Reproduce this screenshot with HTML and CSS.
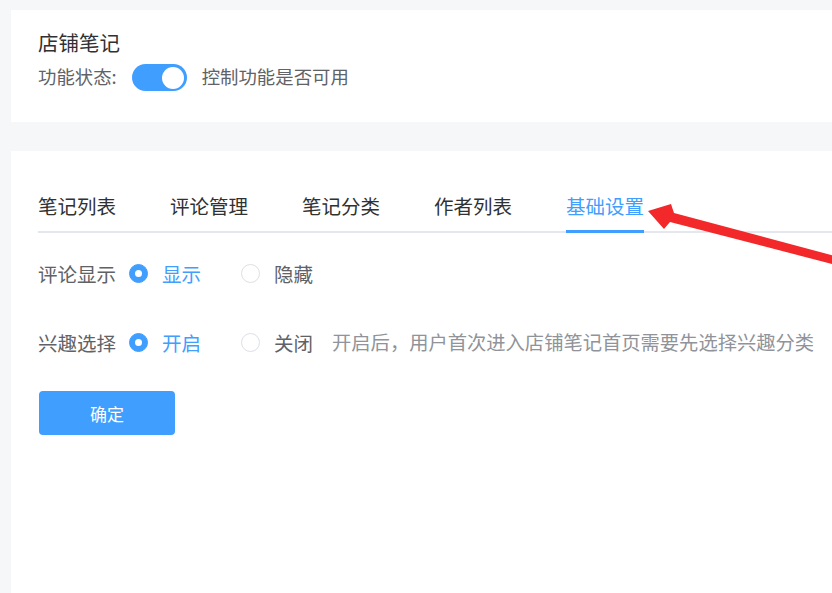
FILE: index.html
```html
<!DOCTYPE html>
<html lang="zh-CN">
<head>
<meta charset="utf-8">
<title>店铺笔记</title>
<link rel="stylesheet" href="styles.css">
</head>
<body>
<div class="page">
  <section class="card card-top">
    <h1 class="title">店铺笔记</h1>
    <div class="status-row">
      <span class="status-label">功能状态:</span>
      <span class="switch"><span class="knob"></span></span>
      <span class="status-hint">控制功能是否可用</span>
    </div>
  </section>

  <section class="card card-main">
    <nav class="tabs">
      <span class="tab">笔记列表</span>
      <span class="tab">评论管理</span>
      <span class="tab">笔记分类</span>
      <span class="tab">作者列表</span>
      <span class="tab active">基础设置</span>
    </nav>

    <div class="form">
      <div class="form-row">
        <span class="form-label">评论显示</span>
        <span class="radio checked"><span class="dot"></span></span>
        <span class="radio-text on">显示</span>
        <span class="radio"></span>
        <span class="radio-text">隐藏</span>
      </div>
      <div class="form-row row-two">
        <span class="form-label">兴趣选择</span>
        <span class="radio checked"><span class="dot"></span></span>
        <span class="radio-text on">开启</span>
        <span class="radio"></span>
        <span class="radio-text radio-text-last">关闭</span>
        <span class="form-hint">开启后，用户首次进入店铺笔记首页需要先选择兴趣分类</span>
      </div>
      <button class="btn-primary" type="button">确定</button>
    </div>
  </section>
</div>

<svg class="arrow" viewBox="0 0 832 593" width="832" height="593" aria-hidden="true">
  <polygon points="648,211 671,204 674,213 842,258 840,266 670,222 664,229" fill="#f2282a"/>
</svg>
</body>
</html>
```

FILE: styles.css
```css
html, body {
  margin: 0;
  padding: 0;
}
body {
  width: 832px;
  height: 593px;
  overflow: hidden;
  background: #f6f7f9;
  font-family: "Noto Sans CJK SC", "Noto Sans", sans-serif;
  position: relative;
}
.page {
  width: 1000px;
  padding: 10px 0 0 11px;
}
.card {
  background: #ffffff;
  box-sizing: border-box;
}
.card-top {
  height: 112px;
  padding: 18px 27px 0;
  margin-bottom: 29px;
}
.title {
  margin: 0;
  font-size: 20.5px;
  font-weight: 400;
  line-height: 28px;
  color: #303133;
}
.status-row {
  display: flex;
  align-items: center;
  height: 28px;
  margin-top: 6px;
}
.status-label {
  font-size: 18.4px;
  color: #606266;
  line-height: 28px;
}
.status-hint {
  font-size: 18.4px;
  color: #606266;
  line-height: 28px;
  margin-left: 15px;
}
.switch {
  margin-left: 15px;
  width: 55px;
  height: 27px;
  border-radius: 14px;
  background: #409eff;
  display: flex;
  align-items: center;
  justify-content: flex-end;
  padding-right: 3px;
  box-sizing: border-box;
  margin-top: 3px;
}
.knob {
  width: 22px;
  height: 22px;
  border-radius: 50%;
  background: #ffffff;
}
.card-main {
  height: 460px;
  padding: 30px 0 0 27px;
}
.tabs {
  display: flex;
  border-bottom: 2px solid #e4e7ed;
}
.tab {
  position: relative;
  height: 50px;
  line-height: 50px;
  font-size: 19.5px;
  color: #303133;
  margin-right: 54px;
}
.tab.active {
  color: #409eff;
}
.tab.active::after {
  content: "";
  position: absolute;
  left: 0;
  right: 0;
  bottom: -2px;
  height: 3px;
  background: #409eff;
}
.form {
  padding-top: 20px;
}
.form-row {
  display: flex;
  align-items: center;
  height: 40px;
  font-size: 19.5px;
}
.row-two {
  margin-top: 29px;
}
.form-label {
  color: #606266;
  margin-right: 13px;
}
.radio {
  width: 19px;
  height: 19px;
  border: 1px solid #dcdfe6;
  border-radius: 50%;
  box-sizing: border-box;
  display: flex;
  align-items: center;
  justify-content: center;
  background: #ffffff;
}
.radio.checked {
  background: #409eff;
  border-color: #409eff;
}
.dot {
  width: 7px;
  height: 7px;
  border-radius: 50%;
  background: #ffffff;
}
.radio-text {
  color: #606266;
  margin-left: 14px;
  margin-right: 40px;
}
.radio-text.on {
  color: #409eff;
}
.radio-text-last {
  margin-right: 19px;
}
.form-hint {
  color: #909399;
  font-size: 19.3px;
}
.btn-primary {
  margin-top: 29px;
  margin-left: 1px;
  width: 136px;
  height: 44px;
  border: 0;
  border-radius: 4px;
  background: #409eff;
  color: #ffffff;
  font-family: "Noto Sans CJK SC", "Noto Sans", sans-serif;
  font-size: 17px;
  padding: 0;
}
.arrow {
  position: absolute;
  left: 0;
  top: 0;
  pointer-events: none;
}
```
